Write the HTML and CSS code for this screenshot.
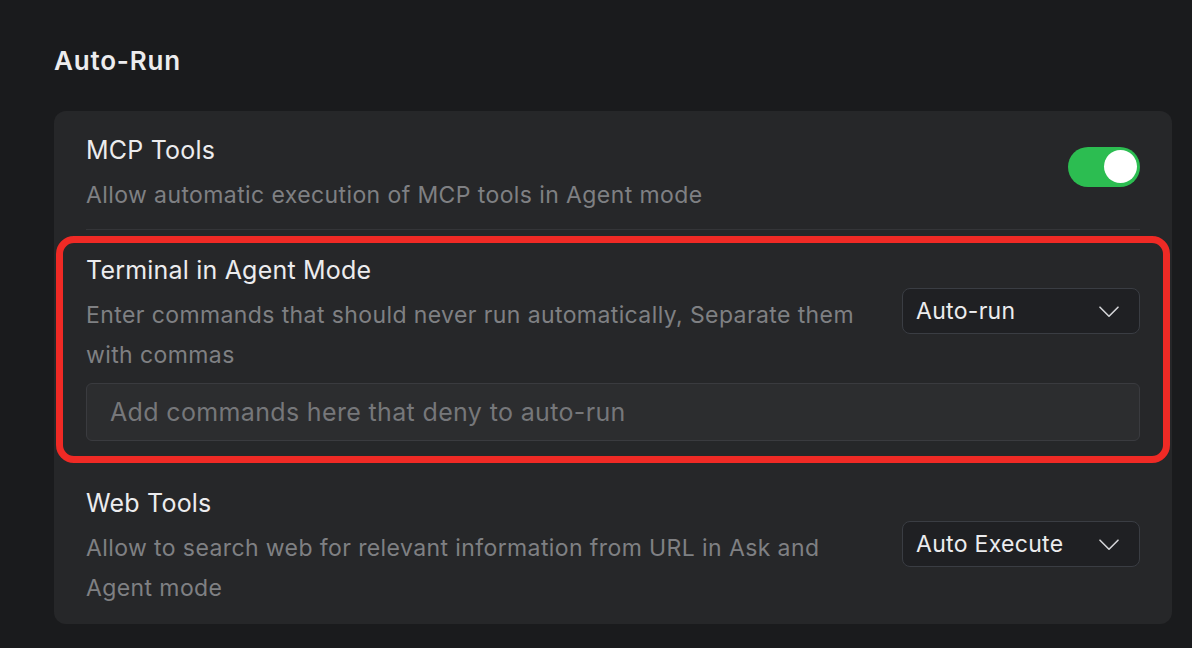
FILE: index.html
```html
<!DOCTYPE html>
<html lang="en">
<head>
<meta charset="utf-8">
<title>Auto-Run</title>
<link rel="stylesheet" href="styles.css">
</head>
<body>
<main class="page">
  <h2 class="section-title">Auto-Run</h2>
  <section class="card">
    <div class="row row-first">
      <div class="row-main">
        <div class="text">
          <div class="title">MCP Tools</div>
          <div class="desc">Allow automatic execution of MCP tools in Agent mode</div>
        </div>
        <div class="toggle on"><span class="knob"></span></div>
      </div>
    </div>
    <div class="row row-highlight">
      <div class="row-main">
        <div class="text">
          <div class="title">Terminal in Agent Mode</div>
          <div class="desc">Enter commands that should never run automatically, Separate them with commas</div>
        </div>
        <div class="select">
          <span>Auto-run</span>
          <svg class="chev" width="20" height="12" viewBox="0 0 20 12"><path d="M1 1.2 L10 10.2 L19 1.2" fill="none" stroke="#d4d5d8" stroke-width="1.6" stroke-linecap="round" stroke-linejoin="round"/></svg>
        </div>
      </div>
      <div class="input">Add commands here that deny to auto-run</div>
    </div>
    <div class="row row-last">
      <div class="row-main">
        <div class="text">
          <div class="title">Web Tools</div>
          <div class="desc">Allow to search web for relevant information from URL in Ask and Agent mode</div>
        </div>
        <div class="select">
          <span>Auto Execute</span>
          <svg class="chev" width="20" height="12" viewBox="0 0 20 12"><path d="M1 1.2 L10 10.2 L19 1.2" fill="none" stroke="#d4d5d8" stroke-width="1.6" stroke-linecap="round" stroke-linejoin="round"/></svg>
        </div>
      </div>
    </div>
  </section>
</main>
</body>
</html>
```

FILE: styles.css
```css
* { box-sizing: border-box; }
html, body {
  margin: 0;
  padding: 0;
  background: #1a1b1d;
}
body {
  font-family: Inter, "Noto Sans", "Liberation Sans", sans-serif;
  color: #ebebed;
}
.page {
  padding: 43px 20px 0 54px;
  width: 1192px;
}
.section-title {
  margin: 0 0 32px 0;
  font-size: 26px;
  line-height: 36px;
  font-weight: 600;
  letter-spacing: 0.8px;
  color: #ececee;
}
.card {
  width: 1118px;
  background: #262729;
  border-radius: 12px;
  padding: 0 32px;
}
.row {
  position: relative;
  padding: 23px 0 14px;
}
.row-first {
  border-bottom: 1px solid #343538;
}
.row-highlight {
  padding-top: 24px;
  padding-bottom: 23px;
}
.row-highlight::after {
  content: "";
  position: absolute;
  left: -30px;
  right: -30px;
  top: 6px;
  bottom: 1px;
  border: 7px solid #ef2a25;
  border-radius: 18px;
  pointer-events: none;
}
.row-last {
  padding-bottom: 16px;
}
.row-main {
  display: flex;
  align-items: center;
  gap: 40px;
}
.text {
  flex: 1;
  min-width: 0;
}
.title {
  font-size: 25px;
  line-height: 32px;
  letter-spacing: 0.2px;
  color: #ececee;
  margin-bottom: 9px;
}
.desc {
  font-size: 23px;
  line-height: 40px;
  letter-spacing: 0.4px;
  color: #7f8083;
}
.toggle {
  width: 72px;
  height: 40px;
  border-radius: 20px;
  background: #2cbd51;
  display: flex;
  align-items: center;
  justify-content: flex-end;
  padding: 0 3px;
  margin-bottom: 16px;
}
.knob {
  width: 33px;
  height: 33px;
  border-radius: 50%;
  background: #ffffff;
}
.select {
  width: 238px;
  height: 46px;
  flex: none;
  border: 1px solid #3a3d43;
  background: #1f2023;
  border-radius: 8px;
  display: flex;
  align-items: center;
  justify-content: space-between;
  padding: 0 20px 0 13px;
  font-size: 23px;
  letter-spacing: 0.3px;
  color: #ececee;
  margin-bottom: 8px;
}
.chev { display: block; margin-top: 2px; }
.input {
  margin-top: 8px;
  height: 58px;
  border: 1px solid #3a3b3f;
  background: #2c2d2f;
  border-radius: 6px;
  padding: 0 23px;
  display: flex;
  align-items: center;
  font-size: 25px;
  letter-spacing: 0.35px;
  color: #76777a;
}
```
